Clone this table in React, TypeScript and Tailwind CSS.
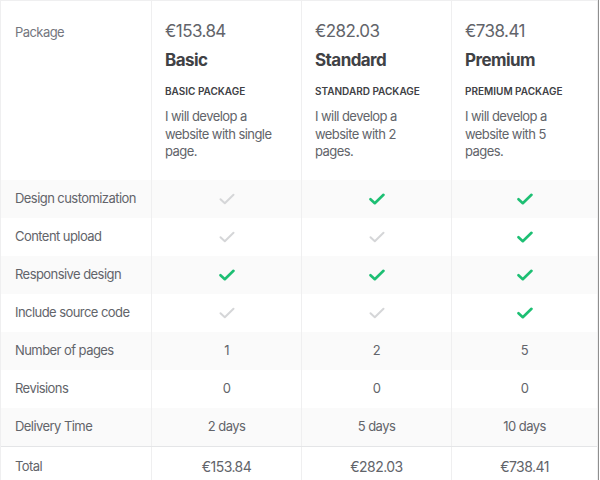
import React from "react";

type Cell = boolean | string;

const packages = [
  { price: "€153.84", name: "Basic", title: "BASIC PACKAGE", desc: "I will develop a website with single page." },
  { price: "€282.03", name: "Standard", title: "STANDARD PACKAGE", desc: "I will develop a website with 2 pages." },
  { price: "€738.41", name: "Premium", title: "PREMIUM PACKAGE", desc: "I will develop a website with 5 pages." },
];

const rows: { label: string; values: Cell[] }[] = [
  { label: "Design customization", values: [false, true, true] },
  { label: "Content upload", values: [false, false, true] },
  { label: "Responsive design", values: [true, true, true] },
  { label: "Include source code", values: [false, false, true] },
  { label: "Number of pages", values: ["1", "2", "5"] },
  { label: "Revisions", values: ["0", "0", "0"] },
  { label: "Delivery Time", values: ["2 days", "5 days", "10 days"] },
];

const Check = ({ on }: { on: boolean }) => (
  <svg width="16" height="12" viewBox="0 0 16 12" className={on ? "text-[#1dbf73]" : "text-[#d5d6d8]"}>
    <path d="M1.5 6.2 L5.8 10.2 L14.5 1.8" fill="none" stroke="currentColor" strokeWidth={on ? 2.6 : 2} strokeLinecap="round" strokeLinejoin="round" />
  </svg>
);

const App = () => {
  return (
    <div className="w-[600px] h-[480px] overflow-hidden bg-white font-['Inter',sans-serif] tracking-[-0.035em] text-[#62646a]">
      <div className="w-[599px] border-r border-[#8f8f8f]">
        <div className="w-[598px] border-t border-l border-r border-[#efeff0]">
          {/* Header */}
          <div className="grid grid-cols-[150px_150px_150px_1fr] h-[179px]">
            <div className="pl-[14px] pt-[22px] text-[13px] text-[#74767e]">Package</div>
            {packages.map((p) => (
              <div key={p.name} className="border-l border-[#efeff0] pl-[13px] pr-3 pt-[19px]">
                <div className="text-[17px] leading-[22px] text-[#62646a]">{p.price}</div>
                <div className="mt-[7px] text-[17px] leading-[22px] font-bold text-[#404145]">{p.name}</div>
                <div className="mt-[13px] text-[10px] leading-[14px] font-semibold tracking-[0em] text-[#404145]">{p.title}</div>
                <div className="mt-[10px] w-[118px] text-[13px] leading-[17.5px] text-[#62646a]">{p.desc}</div>
              </div>
            ))}
          </div>

          {/* Feature rows */}
          {rows.map((r, i) => (
            <div
              key={r.label}
              className={`grid grid-cols-[150px_150px_150px_1fr] h-[38px] ${i % 2 === 0 ? "bg-[#fafafa]" : "bg-white"}`}
            >
              <div className="flex items-center pl-[14px] text-[13px] text-[#62646a]">{r.label}</div>
              {r.values.map((v, j) => (
                <div key={j} className="flex items-center justify-center border-l border-[#efeff0] text-[13px] text-[#62646a]">
                  {typeof v === "boolean" ? <Check on={v} /> : v}
                </div>
              ))}
            </div>
          ))}

          {/* Total */}
          <div className="grid grid-cols-[150px_150px_150px_1fr] h-[40px] border-t border-[#e4e5e7]">
            <div className="flex items-center pl-[14px] text-[13px] text-[#62646a]">Total</div>
            {packages.map((p) => (
              <div key={p.name} className="flex items-center justify-center border-l border-[#efeff0] text-[14px] text-[#62646a]">
                {p.price}
              </div>
            ))}
          </div>
        </div>
      </div>
    </div>
  );
};

export default App;
